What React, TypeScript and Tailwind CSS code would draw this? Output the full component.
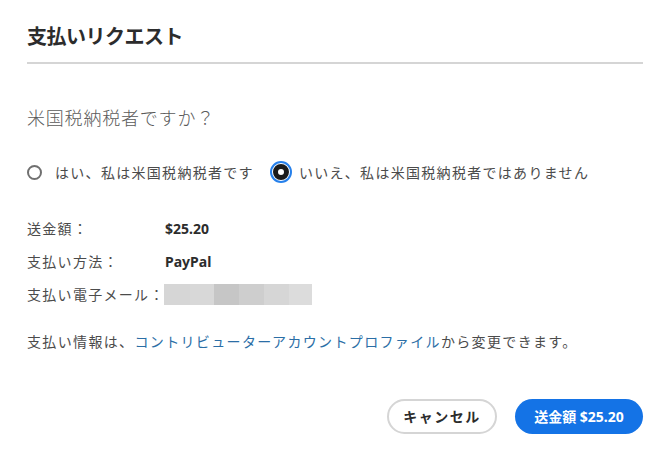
import React from 'react';

const PaymentRequest = () => {
    const emailBlocks = [
        { w: 26, c: "#d6d6d6" },
        { w: 24, c: "#d8d8d8" },
        { w: 25, c: "#c6c6c6" },
        { w: 25, c: "#cecece" },
        { w: 25, c: "#d6d6d6" },
        { w: 23, c: "#dcdcdc" },
    ];

    return (
        <div className="w-[672px] h-[458px] bg-white pl-[27px] pr-[29px] pt-[23px] font-['Noto_Sans','Noto_Sans_CJK_JP',sans-serif] text-[#4b4b4b]">
            {/* Header */}
            <h1 className="text-[20px] leading-[28px] font-bold text-[#2c2c2c] tracking-[-0.5px]">
                支払いリクエスト
            </h1>
            <div className="mt-[11px] h-[2px] bg-[#d5d5d5]" />

            {/* Question */}
            <p className="mt-[41px] text-[18px] leading-[26px] font-light tracking-[0.8px] text-[#5a5a5a]">
                米国税納税者ですか？
            </p>

            {/* Radios */}
            <div className="mt-[29px] h-[24px] flex items-center text-[14px] tracking-[1.3px]">
                <span className="w-[15px] h-[15px] rounded-full border-2 border-[#707070]" />
                <span className="ml-[13px]">はい、私は米国税納税者です</span>
                <span className="ml-[16px] w-[22px] h-[22px] rounded-full border-2 border-[#2680eb] flex items-center justify-center">
                    <span className="w-[16px] h-[16px] rounded-full border-[5px] border-[#1b1b1b] bg-white" />
                </span>
                <span className="ml-[7px]">いいえ、私は米国税納税者ではありません</span>
            </div>

            {/* Details */}
            <div className="mt-[33px] flex flex-col gap-[11px] text-[14px]">
                <div className="h-[22px] flex items-center">
                    <span className="w-[138px] tracking-[1.3px]">送金額：</span>
                    <span className="font-bold text-[#2c2c2c]">$25.20</span>
                </div>
                <div className="h-[22px] flex items-center">
                    <span className="w-[138px] tracking-[1.3px]">支払い方法：</span>
                    <span className="font-bold text-[#2c2c2c]">PayPal</span>
                </div>
                <div className="h-[22px] flex items-center">
                    <span className="w-[137px] tracking-[1.3px] whitespace-nowrap">支払い電子メール：</span>
                    <span className="flex h-[21px]">
                        {emailBlocks.map((b, i) => (
                            <span key={i} className="h-full" style={{ width: b.w, backgroundColor: b.c }} />
                        ))}
                    </span>
                </div>
            </div>

            {/* Info */}
            <p className="mt-[26px] h-[22px] leading-[22px] text-[14px] tracking-[1.35px] whitespace-nowrap">
                支払い情報は、<a className="text-[#2b6ea6]">コントリビューターアカウントプロファイル</a>から変更できます。
            </p>

            {/* Buttons */}
            <div className="mt-[46px] flex justify-end gap-[18px]">
                <button className="w-[110px] h-[35px] rounded-full border-2 border-[#d5d5d5] bg-white text-[14px] font-bold text-[#2c2c2c] tracking-[1.5px]">
                    キャンセル
                </button>
                <button className="w-[128px] h-[35px] rounded-full bg-[#1473e6] text-[14px] font-bold text-white">
                    送金額 $25.20
                </button>
            </div>
        </div>
    );
};

export default PaymentRequest;
